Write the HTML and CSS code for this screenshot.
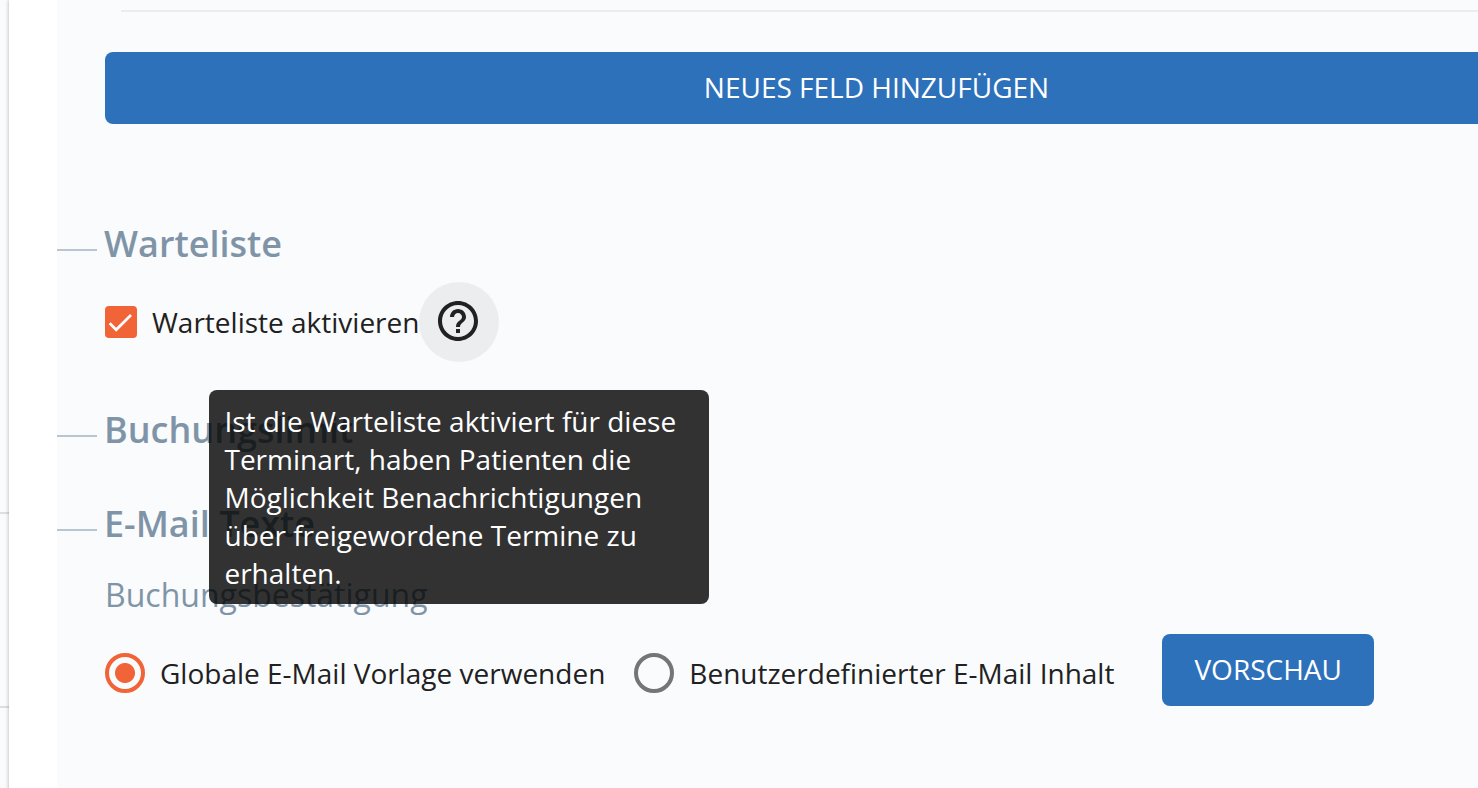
FILE: index.html
```
<!DOCTYPE html>
<html lang="de">
<head>
    <meta charset="UTF-8">
    <meta name="viewport" content="width=device-width, initial-scale=1.0">
    <title>Terminart bearbeiten</title>
    <link rel="stylesheet" href="styles.css">
</head>
<body>

    <div class="page">
        <aside class="sidebar">
            <div class="sidebar-row"></div>
            <div class="sidebar-row short"></div>
        </aside>

        <main class="card">
            <form class="panel">
                <hr class="divider">
                <button type="button" class="btn btn-wide">NEUES FELD HINZUFÜGEN</button>

                <section class="section">
                    <h2 class="section-title">Warteliste</h2>
                    <div class="waitlist">
                        <label class="option" for="waitlist">
                            <input type="checkbox" class="checkbox" id="waitlist" checked>
                            Warteliste aktivieren
                        </label>
                        <div class="help">
                            <button type="button" class="help-btn" aria-label="Hilfe" aria-describedby="waitlist-tip">
                                <svg class="help-icon" viewBox="0 0 24 24" aria-hidden="true">
                                    <path fill="currentColor" d="M11 18h2v-2h-2v2zm1-16C6.48 2 2 6.48 2 12s4.48 10 10 10 10-4.48 10-10S17.52 2 12 2zm0 18c-4.41 0-8-3.59-8-8s3.59-8 8-8 8 3.59 8 8-3.59 8-8 8zm0-14c-2.21 0-4 1.79-4 4h2c0-1.1.9-2 2-2s2 .9 2 2c0 2-3 1.75-3 5h2c0-2.25 3-2.5 3-5 0-2.21-1.79-4-4-4z"/>
                                </svg>
                            </button>
                            <div class="tooltip" role="tooltip" id="waitlist-tip">Ist die Warteliste aktiviert für diese Terminart, haben Patienten die Möglichkeit Benachrichtigungen über freigewordene Termine zu erhalten.</div>
                        </div>
                    </div>
                </section>

                <section class="section">
                    <h2 class="section-title">Buchungslimit</h2>
                </section>

                <section class="section">
                    <h2 class="section-title">E-Mail Texte</h2>
                    <h3 class="sub-title">Buchungsbestätigung</h3>
                    <div class="template">
                        <div class="template-options">
                            <label class="option" for="tpl-global">
                                <input type="radio" class="radio" name="template" id="tpl-global" checked>
                                Globale E-Mail Vorlage verwenden
                            </label>
                            <label class="option" for="tpl-custom">
                                <input type="radio" class="radio" name="template" id="tpl-custom">
                                Benutzerdefinierter E-Mail Inhalt
                            </label>
                        </div>
                        <button type="button" class="btn">VORSCHAU</button>
                    </div>
                </section>
            </form>
        </main>
    </div>

</body>
</html>
```
FILE: styles.css
```
* {
    margin: 0;
    padding: 0;
    box-sizing: border-box;
}

body {
    font-family: 'Open Sans', sans-serif;
    font-size: 28px;
    line-height: 38px;
    color: #212121;
    background: #fafbfd;
    overflow: hidden;
}

.page {
    display: flex;
    min-height: 100vh;
}

/* Sidebar */
.sidebar {
    width: 9px;
    flex-shrink: 0;
}

.sidebar-row {
    height: 514px;
    border-bottom: 2px solid #dcdfe0;
}

.sidebar-row.short {
    height: 194px;
}

/* Card */
.card {
    flex: 1;
    min-width: 0;
    padding-left: 48px;
    background: #fff;
    box-shadow: 0 0 4px rgba(0, 0, 0, 0.3);
}

.panel {
    min-height: 100vh;
    padding: 10px 48px 48px;
    background: #fafbfd;
}

.divider {
    height: 2px;
    border: none;
    background: #ebeced;
    margin: 0 -48px 40px 16px;
}

.btn {
    height: 72px;
    padding: 0 32px 2px;
    border: none;
    border-radius: 8px;
    background: #2d71bb;
    color: #fff;
    font-family: inherit;
    font-size: 28px;
    line-height: 38px;
    white-space: nowrap;
    cursor: pointer;
}

/* the wide button runs past the right edge of the panel */
.btn-wide {
    display: block;
    width: calc(100% + 218px);
    margin-bottom: 96px;
}

/* Sections */
.section {
    margin-bottom: 44px;
}

.section-title {
    display: flex;
    gap: 7px;
    margin-left: -48px;
    padding-bottom: 2px;
    font-size: 36px;
    font-weight: 600;
    line-height: 48px;
    color: #7f95a7;
}

.section-title::before {
    content: "";
    width: 40px;
    height: 2px;
    align-self: flex-end;
    margin-bottom: 17px;
    background: #b9c6d1;
}

.sub-title {
    margin: 23px 0 17px;
    font-size: 32px;
    font-weight: 400;
    line-height: 44px;
    color: #7f95a7;
}

.option {
    display: flex;
    align-items: center;
    gap: 15px;
    white-space: nowrap;
    cursor: pointer;
}

.checkbox,
.radio {
    appearance: none;
    flex-shrink: 0;
    cursor: pointer;
}

.checkbox {
    width: 32px;
    height: 32px;
    border: 4px solid #757575;
    border-radius: 4px;
}

.checkbox:checked {
    border: none;
    background: #f06437 url("data:image/svg+xml,%3Csvg xmlns='http://www.w3.org/2000/svg' viewBox='0 0 32 32'%3E%3Cpath d='M4.7 17.3l6.5 6.5L26 9' fill='none' stroke='%23fff' stroke-width='2.7'/%3E%3C/svg%3E") center / 32px;
}

.radio {
    width: 40px;
    height: 40px;
    border: 4px solid #757575;
    border-radius: 50%;
}

.radio:checked {
    border-color: #f06437;
    background: radial-gradient(circle, #f06437 9.5px, transparent 10.5px);
}

/* Waitlist */
.waitlist {
    display: flex;
    align-items: center;
    margin-top: 12px;
}

.help {
    position: relative;
}

.help-btn {
    display: flex;
    align-items: center;
    justify-content: center;
    width: 80px;
    height: 80px;
    padding: 0 2px 2px 0;
    border: none;
    border-radius: 50%;
    background: #ecedef;
    color: #212121;
    cursor: pointer;
}

.help-icon {
    width: 48px;
    height: 48px;
}

.tooltip {
    position: absolute;
    top: 108px;
    left: 50%;
    transform: translateX(-50%);
    width: 500px;
    padding: 12px 15px;
    border-radius: 8px;
    background: rgba(0, 0, 0, 0.8);
    color: #fff;
}

/* E-mail template */
.template {
    display: flex;
    align-items: center;
    gap: 48px;
}

.template-options {
    display: flex;
    gap: 29px;
    padding-top: 6px;
}
```
